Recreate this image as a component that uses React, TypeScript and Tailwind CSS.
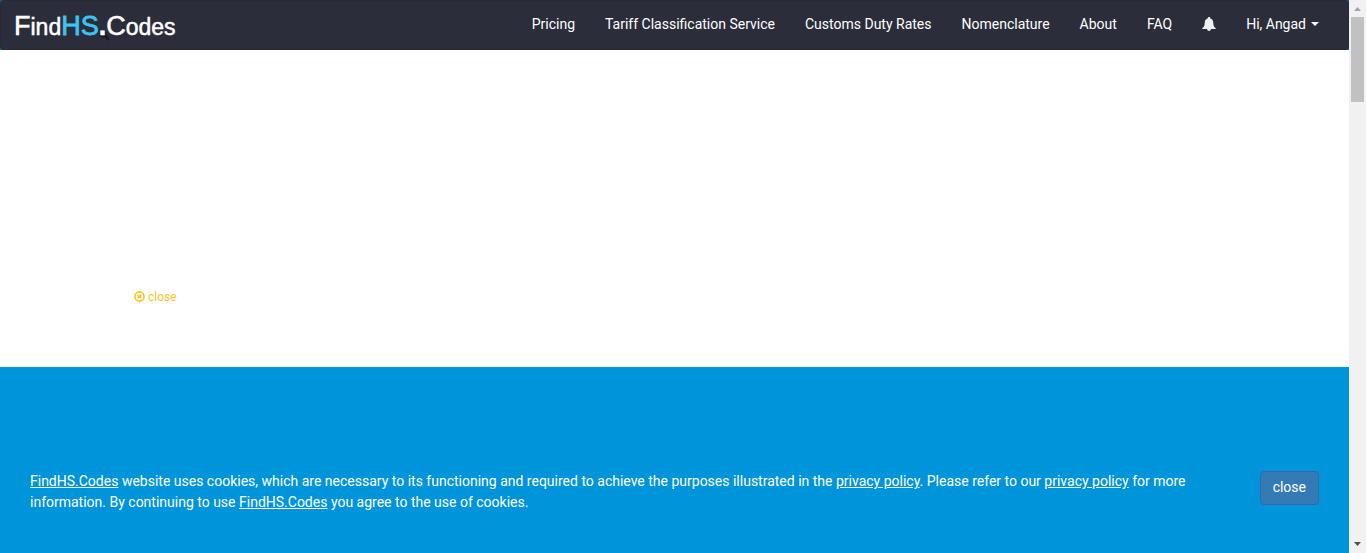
import React from "react";

const navLinks = [
  "Pricing",
  "Tariff Classification Service",
  "Customs Duty Rates",
  "Nomenclature",
  "About",
  "FAQ",
];

function Logo() {
  return (
    <a
      href="#home"
      className="flex items-baseline pt-[2px] font-['Liberation_Sans',Arial,sans-serif] text-[23px] leading-[48px] text-white [-webkit-text-stroke:0.5px_currentColor]"
    >
      <span className="text-[27px]">F</span>
      <span>ind</span>
      <span className="text-[27px] text-[#3cc4f2] [-webkit-text-stroke:0.8px_currentColor]">HS</span>
      <span className="relative text-[27px] font-bold">
        <svg
          className="absolute bottom-2 left-0 h-3 w-3"
          viewBox="0 0 12 12"
          fill="none"
          stroke="#15151b"
          aria-hidden="true"
        >
          <circle cx="4" cy="4" r="3" strokeWidth="1.2" />
          <path d="M6.3 6.3L10 10" strokeWidth="2" />
        </svg>
        <span className="relative">.</span>
      </span>
      <span className="text-[27px]">C</span>
      <span>odes</span>
    </a>
  );
}

function BellIcon() {
  return (
    <svg className="h-[14px] w-[14px]" viewBox="0 0 14 14" fill="currentColor" aria-hidden="true">
      <path d="M7 0C7.8 0 8.3.5 8.3 1.2V1.6C10 2.1 11.1 3.4 11.2 5.2L11.5 8C11.7 9.3 12.6 10.3 13.7 11.2V12H8.9C8.9 13.2 8.1 14 7 14S5.1 13.2 5.1 12H.3V11.2C1.4 10.3 2.3 9.3 2.5 8L2.8 5.2C2.9 3.4 4 2.1 5.7 1.6V1.2C5.7.5 6.2 0 7 0Z" />
    </svg>
  );
}

function RemoveCircleIcon() {
  return (
    <svg className="h-3 w-3" viewBox="0 0 12 12" fill="none" stroke="currentColor" aria-hidden="true">
      <circle cx="5.5" cy="5.5" r="4.6" strokeWidth="1.6" />
      <path d="M3.8 3.8L7.2 7.2M7.2 3.8L3.8 7.2" strokeWidth="1.7" />
    </svg>
  );
}

function ScrollRail() {
  return (
    <div className="flex w-[17px] shrink-0 flex-col items-center justify-between bg-[#f1f1f1]" aria-hidden="true">
      <div className="flex flex-col items-center">
        <svg className="h-[17px] w-[17px]" viewBox="0 0 17 17" fill="#a3a3a3">
          <path d="M5 11L8.5 7L12 11Z" />
        </svg>
        <div className="h-[85px] w-[13px] bg-[#c1c1c1]" />
      </div>
      <svg className="h-[17px] w-[17px]" viewBox="0 0 17 17" fill="#505050">
        <path d="M5 6L8.5 10L12 6Z" />
      </svg>
    </div>
  );
}

export default function App() {
  return (
    <div className="flex min-h-screen bg-white font-[Roboto,sans-serif] text-sm text-white">
      <div className="flex min-w-0 flex-1 flex-col">
        <div className="bg-[#17578f]">
          <header className="flex h-[50px] items-center justify-between rounded border border-[#282936] bg-[#2c2d3a] pr-[29px] pl-[13px]">
            <Logo />
            <nav className="flex items-center gap-[30px] pb-[2px] leading-5">
              {navLinks.map((label) => (
                <a key={label} href="#" className="whitespace-nowrap">
                  {label}
                </a>
              ))}
              <button type="button" aria-label="Notifications" className="text-[#ecf0f1]">
                <BellIcon />
              </button>
              <button type="button" className="flex items-center gap-[5px] whitespace-nowrap">
                Hi, Angad
                <svg className="h-1 w-2" viewBox="0 0 8 4" fill="currentColor" aria-hidden="true">
                  <path d="M0 0H8L4 4Z" />
                </svg>
              </button>
            </nav>
          </header>
        </div>

        <main className="flex h-[317px] items-end bg-white pb-[61px] pl-[134px]">
          <button type="button" className="flex items-center gap-[2px] text-xs leading-[18px] text-[#fdc41f]">
            <RemoveCircleIcon />
            close
          </button>
        </main>

        <section className="flex flex-1 items-end justify-between bg-[#0094db] px-[30px] pb-10">
          <p className="w-[1170px] leading-[21px]">
            <a href="#" className="underline">FindHS.Codes</a> website uses cookies, which are necessary to
            its functioning and required to achieve the purposes illustrated in the{" "}
            <a href="#" className="underline">privacy policy</a>. Please refer to our{" "}
            <a href="#" className="underline">privacy policy</a> for more information. By continuing to use{" "}
            <a href="#" className="underline">FindHS.Codes</a> you agree to the use of cookies.
          </p>
          <button
            type="button"
            className="mb-2 shrink-0 rounded border border-[#2e6da4] bg-[#337ab7] px-3 pt-[5px] pb-[7px] leading-5"
          >
            close
          </button>
        </section>
      </div>
      <ScrollRail />
    </div>
  );
}
